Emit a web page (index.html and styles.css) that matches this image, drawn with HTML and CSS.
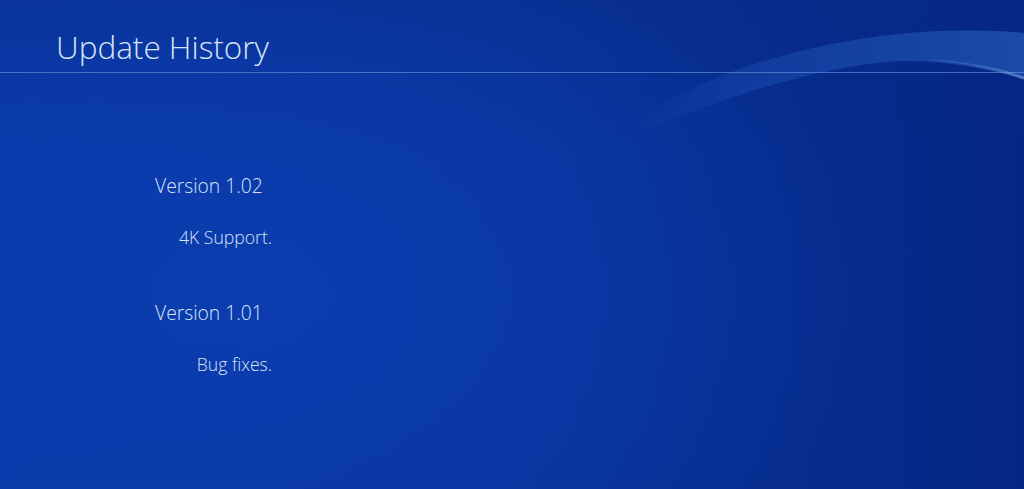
FILE: index.html
```html
<!DOCTYPE html>
<html>
    <head>
        <title>Update History</title>
        <link rel="stylesheet" href="styles.css">
    </head>

    <body>

        <!-- wave across the top right of the backdrop -->
        <svg class="wave" width="1024" height="489" viewBox="0 0 1024 489">
            <defs>
                <linearGradient id="wave_fill" x1="0" y1="0" x2="1" y2="0">
                    <stop offset="0" stop-color="#2a6ad0" stop-opacity="0"/>
                    <stop offset="0.3" stop-color="#2a6ad0" stop-opacity="0.25"/>
                    <stop offset="1" stop-color="#3478d8" stop-opacity="0.45"/>
                </linearGradient>
                <linearGradient id="wave_edge" x1="0" y1="0" x2="1" y2="0">
                    <stop offset="0" stop-color="#6aa8f0" stop-opacity="0"/>
                    <stop offset="1" stop-color="#8cc0ff" stop-opacity="0.55"/>
                </linearGradient>
            </defs>
            <path d="M635 122 C 690 82, 790 42, 920 32 C 970 29, 1005 31, 1024 33 L 1024 76 C 990 66, 950 60, 900 61 C 820 66, 730 95, 648 130 Z" fill="url(#wave_fill)"/>
            <path d="M920 60 C 960 62, 995 68, 1024 78" stroke="url(#wave_edge)" stroke-width="3" fill="none"/>
        </svg>

        <header class="top_bar">
            <h1 class="page_title">Update History</h1>
        </header>

        <main class="history">

            <div class="release">
                <div class="release_version">Version 1.02</div>
                <div class="release_notes">4K Support.</div>
            </div>

            <div class="release">
                <div class="release_version">Version 1.01</div>
                <div class="release_notes">Bug fixes.</div>
            </div>

        </main>

    </body>
</html>
```

FILE: styles.css
```css
html, body {
    margin: 0;
    height: 100%;
}

body {
    position: relative;
    overflow: hidden;
    font-family: "Open Sans", "Lato", sans-serif;
    color: #d8e3f6;
    background-color: #0a37a0;
    background-image:
        radial-gradient(ellipse 60% 75% at 25% 60%, #0b3db0 0%, rgba(11, 61, 176, 0) 100%),
        linear-gradient(to bottom, rgba(8, 40, 130, 0.35) 0%, rgba(8, 40, 130, 0) 30%),
        linear-gradient(to right, #0a39a8 0%, #09349c 50%, #052684 100%);
}

.wave {
    position: absolute;
    top: 0;
    left: 0;
    pointer-events: none;
}

.top_bar {
    position: relative;
    height: 73px;
    border-bottom: 1px solid rgba(120, 160, 230, 0.55);
    box-sizing: border-box;
    padding-left: 56px;
    padding-top: 31px;
}

.page_title {
    margin: 0;
    font-size: 31.5px;
    font-weight: 300;
    line-height: 1;
}

.history {
    position: relative;
    width: 117px;
    padding-left: 155px;
    padding-top: 101px;
}

.release {
    margin-bottom: 52px;
}

.release_version,
.release_notes {
    font-size: 19.3px;
    font-weight: 300;
    line-height: 24px;
    white-space: nowrap;
}

.release_notes {
    font-size: 17.6px;
    text-align: right;
    margin-top: 27px;
}
```
